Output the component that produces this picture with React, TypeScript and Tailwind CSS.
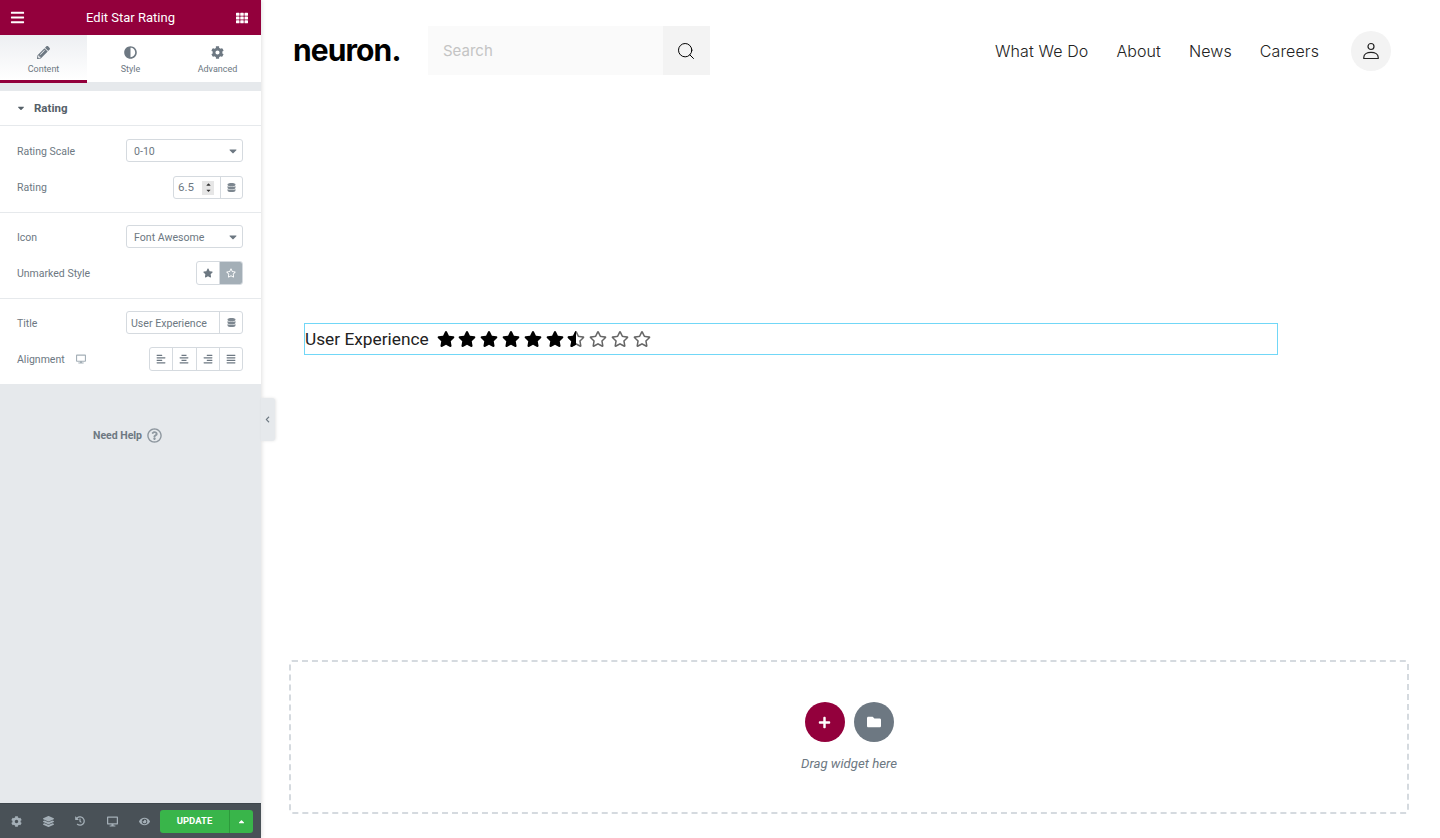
import React from 'react';
import {
  FaAdjust, FaAlignCenter, FaAlignJustify, FaAlignLeft, FaAlignRight, FaBars, FaCaretDown, FaCaretUp,
  FaChevronLeft, FaCog, FaDatabase, FaDesktop, FaEye, FaFolder, FaHistory, FaLayerGroup, FaPencilAlt,
  FaPlus, FaRegQuestionCircle, FaRegStar, FaStar, FaTh,
} from 'react-icons/fa';
import { Search } from 'lucide-react';

const Label = ({ children, low }: { children: React.ReactNode; low?: boolean }) => (
  <span className={low ? 'pt-[4px] text-[10.5px] leading-none text-[#6d7882]' : 'pt-[2px] text-[10.5px] leading-none text-[#6d7882]'}>
    {children}
  </span>
);

const Select = ({ value }: { value: string }) => (
  <div className="flex h-[23px] w-[117px] items-center justify-between rounded-[3px] border border-[#d5dadf] pl-[7px] pr-[3px] text-[10.6px] text-[#6d7882]">
    <span className="pt-[2px]">{value}</span>
    <FaCaretDown className="text-[12px] text-[#6d7882]" />
  </div>
);

const Tab = ({ icon, label, active }: { icon: React.ReactNode; label: string; active?: boolean }) => (
  <div
    className={
      active
        ? 'flex w-[87px] flex-col items-center border-b-[3px] border-[#93003c] bg-gradient-to-b from-[#edeff2] to-white pt-[10px]'
        : 'flex flex-1 flex-col items-center border-b border-[#e6e9ec] pt-[10px]'
    }
  >
    <span className="flex h-[15px] items-center text-[13px] text-[#6d7882]">{icon}</span>
    <span className="mt-[3px] text-[9px] leading-[12px] text-[#6d7882]">{label}</span>
  </div>
);

const Star = ({ fill }: { fill: 'full' | 'half' | 'none' }) => (
  <span className="relative block h-[18px] w-[21.8px] shrink-0">
    {fill !== 'full' && <FaRegStar className="absolute left-0 top-0 text-[18px] text-[#666]" />}
    {fill === 'full' && <FaStar className="absolute left-0 top-0 text-[18px] text-black" />}
    {fill === 'half' && (
      <span className="absolute left-0 top-0 block h-[18px] w-[9px] overflow-hidden">
        <FaStar className="max-w-none text-[18px] text-black" />
      </span>
    )}
  </span>
);

export default function App() {
  return (
    <div className="relative flex h-[838px] w-[1440px] overflow-hidden bg-white font-['Roboto',sans-serif]">
      <aside className="flex h-full w-[261px] shrink-0 flex-col bg-[#e6e9ec] shadow-[1px_0_4px_rgba(0,0,0,0.12)]">
        <div className="flex h-[35px] items-center justify-between bg-[#93003c] pl-[10px] pr-[13px] text-white">
          <FaBars className="text-[15px]" />
          <span className="text-[13px] font-normal">Edit Star Rating</span>
          <FaTh className="text-[12px]" />
        </div>
        <div className="flex h-[48px] bg-white">
          <Tab active icon={<FaPencilAlt />} label="Content" />
          <Tab icon={<FaAdjust />} label="Style" />
          <Tab icon={<FaCog />} label="Advanced" />
        </div>
        <div className="h-[8px] bg-[#e6e9ec]" />
        <div className="flex h-[35px] items-center gap-[8px] border-b border-[#e6e9ec] bg-white pl-[16px]">
          <FaCaretDown className="text-[10px] text-[#556068]" />
          <span className="pt-[1px] text-[11.5px] font-bold text-[#556068]">Rating</span>
        </div>

        <div className="flex flex-col gap-[14px] border-b border-[#e6e9ec] bg-white py-[13px] pl-[17px] pr-[18px]">
          <div className="flex items-center justify-between">
            <Label low>Rating Scale</Label>
            <Select value="0-10" />
          </div>
          <div className="flex items-center justify-between">
            <Label>Rating</Label>
            <div className="flex h-[23px] w-[70px] items-center rounded-[3px] border border-[#d5dadf] text-[11px] text-[#6d7882]">
              <span className="ml-[4px] w-[24px] text-[11.5px]">6.5</span>
              <span className="flex h-[14px] w-[12px] flex-col items-center justify-center bg-[#e6e6e6] text-[7px] leading-none text-[#333]">
                <FaCaretUp className="-mb-[1px]" />
                <FaCaretDown />
              </span>
              <span className="ml-[6px] flex h-full flex-1 items-center justify-center border-l border-[#d5dadf]">
                <FaDatabase className="text-[9px] text-[#7d8790]" />
              </span>
            </div>
          </div>
        </div>

        <div className="flex flex-col gap-[13px] border-b border-[#e6e9ec] bg-white pb-[13px] pl-[17px] pr-[18px] pt-[12px]">
          <div className="flex items-center justify-between">
            <Label low>Icon</Label>
            <Select value="Font Awesome" />
          </div>
          <div className="flex items-center justify-between">
            <Label>Unmarked Style</Label>
            <div className="flex h-[24px] w-[47px] overflow-hidden rounded-[3px] border border-[#d5dadf]">
              <span className="flex flex-1 items-center justify-center border-r border-[#d5dadf] text-[#6d7882]">
                <FaStar className="text-[10px]" />
              </span>
              <span className="flex flex-1 items-center justify-center bg-[#a4afb7] text-white">
                <FaRegStar className="text-[10px]" />
              </span>
            </div>
          </div>
        </div>

        <div className="flex flex-col gap-[13px] bg-white pb-[13px] pl-[17px] pr-[18px] pt-[12px]">
          <div className="flex items-center justify-between">
            <Label low>Title</Label>
            <div className="flex h-[23px] w-[117px] items-center rounded-[3px] border border-[#d5dadf] text-[10.6px] text-[#6d7882]">
              <span className="w-[92px] pl-[4px] pt-[2px]">User Experience</span>
              <span className="flex h-full flex-1 items-center justify-center border-l border-[#d5dadf]">
                <FaDatabase className="text-[9px] text-[#7d8790]" />
              </span>
            </div>
          </div>
          <div className="flex items-center justify-between">
            <div className="flex items-center gap-[11px]">
              <Label>Alignment</Label>
              <FaDesktop className="text-[10px] text-[#a4afb7]" />
            </div>
            <div className="flex h-[24px] w-[94px] overflow-hidden rounded-[3px] border border-[#d5dadf] text-[10px] text-[#6d7882]">
              <span className="flex flex-1 items-center justify-center border-r border-[#d5dadf]"><FaAlignLeft /></span>
              <span className="flex flex-1 items-center justify-center border-r border-[#d5dadf]"><FaAlignCenter /></span>
              <span className="flex flex-1 items-center justify-center border-r border-[#d5dadf]"><FaAlignRight /></span>
              <span className="flex flex-1 items-center justify-center"><FaAlignJustify /></span>
            </div>
          </div>
        </div>

        <div className="flex flex-1 items-start justify-center pt-[44px]">
          <div className="mr-[6px] flex items-center gap-[5px] text-[#6d7882]">
            <span className="text-[10.5px] font-bold">Need Help</span>
            <FaRegQuestionCircle className="text-[15px] text-[#8f98a0]" />
          </div>
        </div>

        <div className="flex h-[35px] items-center border-t border-[#3f474d] bg-[#495157] pl-[10px] pr-[8px] text-[#a4afb7]">
          <span className="flex w-[32px] justify-start pl-[1px]"><FaCog className="text-[11px]" /></span>
          <span className="flex w-[32px] justify-start pl-[1px]"><FaLayerGroup className="text-[11px]" /></span>
          <span className="flex w-[32px] justify-start pl-[1px]"><FaHistory className="text-[10px]" /></span>
          <span className="flex w-[32px] justify-start pl-[1px]"><FaDesktop className="text-[11px]" /></span>
          <span className="flex w-[22px] justify-start pl-[1px]"><FaEye className="text-[11px]" /></span>
          <div className="ml-auto flex h-[23px] w-[93px] overflow-hidden rounded-[3px] bg-[#39b54a] text-white">
            <span className="flex w-[70px] items-center justify-center border-r border-[#2d9a3c] text-[9.5px] font-bold">UPDATE</span>
            <span className="flex flex-1 items-center justify-center"><FaCaretUp className="text-[9px]" /></span>
          </div>
        </div>
      </aside>

      <div className="absolute left-[261px] top-[398px] flex h-[43px] w-[14px] items-center justify-center rounded-r-[3px] bg-[#e6e9ec] pr-[2px] shadow-[1px_0_3px_rgba(0,0,0,0.1)]">
        <FaChevronLeft className="text-[7px] text-[#6d7882]" />
      </div>

      <main className="flex flex-1 flex-col">
        <header className="flex h-[102px] items-start pl-[32px] pr-[49px] font-['Inter',sans-serif]">
          <span className="mt-[32px] w-[135px] text-[30px] font-bold leading-[36px] tracking-[-0.9px] text-black">neuron.</span>
          <div className="mt-[26px] flex h-[49px] w-[282px] bg-[#fafafa]">
            <span className="flex-1 pl-[15px] text-[15px] leading-[49px] text-[#c4c4c4]">Search</span>
            <span className="flex w-[47px] items-center justify-center bg-[#f3f3f3]">
              <Search className="-ml-[1px] h-[20px] w-[20px] text-black" strokeWidth={1.2} />
            </span>
          </div>
          <nav className="ml-auto mt-[31px] flex items-center">
            <span className="pt-[1px] text-[16px] font-light leading-[39px] tracking-[0.1px] text-[#222]">What We Do</span>
            <span className="ml-[28px] pt-[1px] text-[16px] font-light leading-[39px] tracking-[0.1px] text-[#222]">About</span>
            <span className="ml-[28px] pt-[1px] text-[16px] font-light leading-[39px] tracking-[0.1px] text-[#222]">News</span>
            <span className="ml-[28px] pt-[1px] text-[16px] font-light leading-[39px] tracking-[0.1px] text-[#222]">Careers</span>
            <span className="ml-[32px] flex h-[40px] w-[40px] items-center justify-center rounded-full bg-[#f3f3f3]">
              <svg width="18" height="18" viewBox="0 0 18 18" fill="none" stroke="#222" strokeWidth="1.2">
                <circle cx="9" cy="4.5" r="3" />
                <path d="M1.8 16.5v-1.2c0-3 3-5 7.2-5s7.2 2 7.2 5v1.2z" />
              </svg>
            </span>
          </nav>
        </header>

        <section className="ml-[43px] mt-[221px] flex h-[32px] w-[974px] items-center border border-[#71d7f7]">
          <span className="mr-[8px] pt-[2px] text-[17.3px] leading-none text-[#222]">User Experience</span>
          <div className="flex items-center">
            {['full', 'full', 'full', 'full', 'full', 'full', 'half', 'none', 'none', 'none'].map((s, i) => (
              <Star key={i} fill={s as 'full' | 'half' | 'none'} />
            ))}
          </div>
        </section>

        <section className="ml-[28px] mt-[305px] flex h-[154px] w-[1120px] flex-col items-center rounded-[3px] border-2 border-dashed border-[#d5dadf] pt-[40px]">
          <div className="flex gap-[9px]">
            <span className="flex h-[40px] w-[40px] items-center justify-center rounded-full bg-[#93003c] text-white">
              <FaPlus className="text-[13px]" />
            </span>
            <span className="flex h-[40px] w-[40px] items-center justify-center rounded-full bg-[#6d7882] text-white">
              <FaFolder className="text-[14px]" />
            </span>
          </div>
          <span className="mt-[15px] text-[13.2px] italic leading-[14px] text-[#6d7882]">Drag widget here</span>
        </section>
      </main>
    </div>
  );
}
